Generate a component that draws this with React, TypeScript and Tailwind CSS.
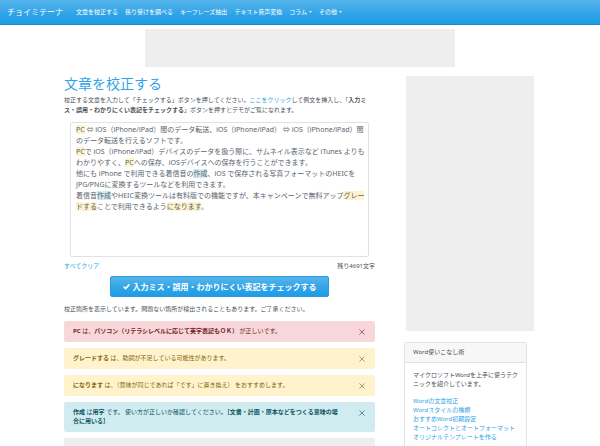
import type { ReactNode } from "react";

const navItems = [
  { label: "文章を校正する" },
  { label: "係り受けを調べる" },
  { label: "キーフレーズ抽出" },
  { label: "テキスト音声変換" },
  { label: "コラム", menu: true },
  { label: "その他", menu: true },
];

const wordLinks = [
  "Wordの文章校正",
  "Wordスタイルの種類",
  "おすすめWord初期設定",
  "オートコレクトとオートフォーマット",
  "オリジナルテンプレートを作る",
];

const alertTones = {
  danger: "bg-[#f8d7da] text-[#721c24]",
  warning: "bg-[#fff3cd] text-[#856404]",
  info: "bg-[#d1ecf1] text-[#0c5460]",
};

interface AlertProps {
  tone: keyof typeof alertTones;
  children: ReactNode;
}

function Alert({ tone, children }: AlertProps) {
  return (
    <div
      role="alert"
      className={`flex items-start justify-between rounded-xs py-1.5 pr-2.5 pl-[9px] ${alertTones[tone]}`}
    >
      <p className="max-w-[270px] text-[6px] leading-[9px]">{children}</p>
      <button type="button" aria-label="閉じる" className="mt-0.5 opacity-60">
        <svg viewBox="0 0 6 6" className="size-1.5" stroke="currentColor" strokeWidth="1">
          <path d="M0.4 0.4 5.6 5.6M5.6 0.4 0.4 5.6" />
        </svg>
      </button>
    </div>
  );
}

function Warn({ children }: { children: ReactNode }) {
  return <mark className="bg-[#fff3cd] text-inherit">{children}</mark>;
}

function Info({ children }: { children: ReactNode }) {
  return <mark className="bg-[#d1ecf1] text-inherit">{children}</mark>;
}

function Navbar() {
  return (
    <header className="flex h-[25px] items-center border-b border-[#178acc] bg-linear-to-b from-[#54b4eb] via-[#2fa4e7] via-60% to-[#1d9ce5] pl-[7px] text-white">
      <a href="#" className="text-[8px] leading-3">
        チョイミテーナ
      </a>
      <nav className="ml-[13px] flex gap-[7px] text-[6px] leading-[9px]">
        {navItems.map((item) =>
          item.menu ? (
            <button key={item.label} type="button" className="flex items-center gap-0.5">
              {item.label}
              <svg viewBox="0 0 4 2" className="h-0.5 w-[3px]" fill="currentColor">
                <path d="M0 0h4L2 2z" />
              </svg>
            </button>
          ) : (
            <a key={item.label} href="#">
              {item.label}
            </a>
          ),
        )}
      </nav>
    </header>
  );
}

function Editor() {
  return (
    <div
      role="textbox"
      aria-multiline="true"
      aria-label="校正する文章"
      contentEditable
      suppressContentEditableWarning
      className="mx-1.5 mt-[7px] min-h-[135px] rounded-xs border border-[#dfe3e6] pt-px pl-[5px] text-[7px] leading-[11px] whitespace-nowrap text-[#5b636b] outline-none"
    >
      <Warn>PC</Warn> ⇔ iOS（iPhone/iPad）間のデータ転送、iOS（iPhone/iPad） ⇔ iOS（iPhone/iPad）間
      <br />
      のデータ転送を行えるソフトです。
      <br />
      <Warn>PC</Warn>で iOS（iPhone/iPad）デバイスのデータを扱う際に、サムネイル表示など iTunes よりも
      <br />
      わかりやすく、<Warn>PC</Warn>への保存、iOSデバイスへの保存を行うことができます。
      <br />
      他にも iPhone で利用できる着信音の<Info>作成</Info>、iOS で保存される写真フォーマットのHEICを
      <br />
      JPG/PNGに変換するツールなどを利用できます。
      <br />
      着信音<Info>作成</Info>やHEIC変換ツールは有料版での機能ですが、本キャンペーンで無料アップ<Warn>グレー</Warn>
      <br />
      <Warn>ドする</Warn>ことで利用できるよう<Warn>になります</Warn>。
    </div>
  );
}

function Sidebar() {
  return (
    <aside className="w-[130px] shrink-0">
      <div className="ml-0.5 h-[255px] bg-[#eeeeee]" />
      <section className="mt-[11px] mr-[7px] rounded-xs border border-[#e2e2e2] pb-4 text-[6px]">
        <h2 className="border-b border-[#e2e2e2] bg-[#f7f7f7] px-2 py-[5px] leading-[9px]">
          Word使いこなし術
        </h2>
        <div className="pt-2 pr-[7px] pl-2 leading-[9px]">
          <p>
            マイクロソフトWordを上手に使うテク
            <br />
            ニックを紹介しています。
          </p>
          <ul className="mt-2">
            {wordLinks.map((link) => (
              <li key={link}>
                <a href="#" className="text-[#2fa4e7]">
                  {link}
                </a>
              </li>
            ))}
          </ul>
        </div>
      </section>
    </aside>
  );
}

export default function App() {
  return (
    <div
      lang="ja"
      className="h-screen overflow-hidden bg-white font-['Noto_Sans','Noto_Sans_CJK_JP',sans-serif] text-[#495057]"
    >
      <Navbar />
      <div className="mx-auto mt-1 h-[38px] w-[310px] bg-[#eeeeee]" />

      <div className="mt-[9px] flex gap-[29px] pr-[66px] pl-16">
        <main className="min-w-0 flex-1 text-[6px] leading-[9px]">
          <h1 className="text-[14px] leading-[15px] text-[#2fa4e7]">文章を校正する</h1>
          <p className="mt-1 leading-[10px]">
            校正する文章を入力して「チェックする」ボタンを押してください。
            <a href="#" className="text-[#2fa4e7]">
              ここをクリック
            </a>
            して例文を挿入し、「
            <b>入力ミス・誤用・わかりにくい表記をチェックする</b>」ボタンを押すとデモがご覧になれます。
          </p>

          <Editor />

          <div className="mt-[5px] flex justify-between">
            <a href="#" className="text-[#2fa4e7]">
              すべてクリア
            </a>
            <span>残り4691文字</span>
          </div>

          <button
            type="button"
            className="mx-auto mt-[5px] flex h-[21px] w-[219px] items-center justify-center gap-[3px] rounded-xs border border-[#2a9bdc] bg-linear-to-b from-[#54b4eb] via-[#2fa4e7] via-60% to-[#1d9ce5] text-[8px] leading-3 font-bold whitespace-nowrap text-white"
          >
            <svg viewBox="0 0 8 8" className="size-[7px] shrink-0" fill="none" stroke="currentColor" strokeWidth="1.8">
              <path d="M0.8 4.2 3 6.4 7.3 1.6" />
            </svg>
            入力ミス・誤用・わかりにくい表記をチェックする
          </button>

          <p className="mt-2">
            校正箇所を表示しています。問題ない箇所が検出されることもあります。ご了承ください。
          </p>

          <div className="mt-[7px] flex flex-col gap-1.5">
            <Alert tone="danger">
              <b>PC</b> は、<b>パソコン（リテラシレベルに応じて英字表記もＯＫ）</b> が正しいです。
            </Alert>
            <Alert tone="warning">
              <b>グレードする</b> は、助詞が不足している可能性があります。
            </Alert>
            <Alert tone="warning">
              <b>になります</b> は、（意味が同じであれば「です」に置き換え） をおすすめします。
            </Alert>
            <Alert tone="info">
              <b>作成</b> は<b>用字</b> です。 使い方が正しいか確認してください。
              <b>［文書・計画・原本などをつくる意味の場合に用いる］</b>
            </Alert>
            <div className="h-10 bg-[#eeeeee]" />
          </div>
        </main>

        <Sidebar />
      </div>
    </div>
  );
}
